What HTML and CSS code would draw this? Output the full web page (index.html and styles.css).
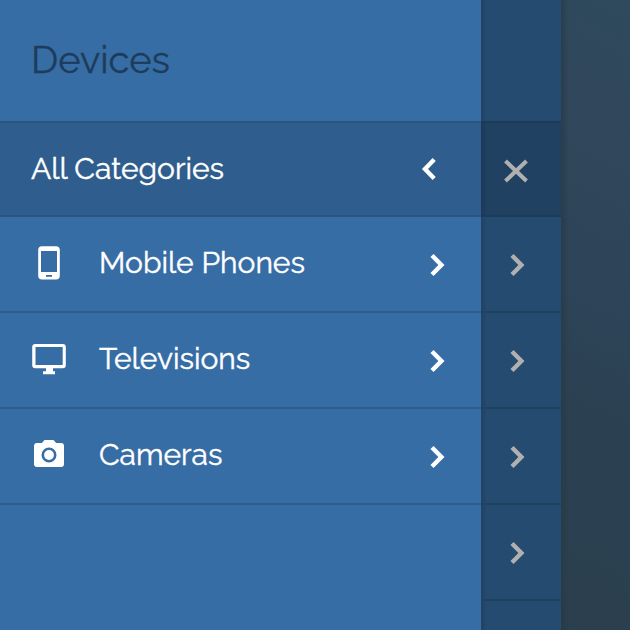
FILE: index.html
```
<!DOCTYPE html>
<html lang="en">
<head>
<meta charset="utf-8">
<title>Devices</title>
<link rel="stylesheet" href="styles.css">
</head>
<body>
<div class="screen">
  <nav class="panel">
    <h2 class="title">Devices</h2>
    <a class="row back"><span class="label">All Categories</span>
      <svg class="chev" width="16" height="24" viewBox="0 0 16 24"><path d="M13.200 2.500 4 12l9.200 9.500"/></svg></a>
    <a class="row"><svg class="icon" width="36" height="36" viewBox="0 0 36 36"><path fill-rule="evenodd" d="M11 1.200h14a3.800 3.800 0 0 1 3.800 3.800v25.700a3.800 3.800 0 0 1-3.800 3.800H11a3.800 3.800 0 0 1-3.800-3.800V5A3.800 3.800 0 0 1 11 1.200zM10 6v21h16V6zM15 30v1.700h6V30z"/></svg><span class="label">Mobile Phones</span>
      <svg class="chev" width="16" height="24" viewBox="0 0 16 24"><path d="m3 2.500 9.400 9.500L3 21.500"/></svg></a>
    <a class="row"><svg class="icon" width="36" height="36" viewBox="0 0 36 36"><path fill-rule="evenodd" d="M4.200 3h27.600a3 3 0 0 1 3 3v18.200a3 3 0 0 1-3 3H22v3h2v3H12v-3h3v-3H4.200a3 3 0 0 1-3-3V6a3 3 0 0 1 3-3zm.3 3v18h27.200V6z"/></svg><span class="label">Televisions</span>
      <svg class="chev" width="16" height="24" viewBox="0 0 16 24"><path d="m3 2.500 9.400 9.500L3 21.500"/></svg></a>
    <a class="row"><svg class="icon" width="36" height="36" viewBox="0 0 36 36"><path fill-rule="evenodd" d="M13.500 3h9l2.700 3H30a3 3 0 0 1 3 3v18a3 3 0 0 1-3 3H6a3 3 0 0 1-3-3V9a3 3 0 0 1 3-3h4.800zM18 10.500a7.500 7.500 0 1 0 0 15 7.500 7.500 0 0 0 0-15z"/><circle cx="18" cy="18" r="4.900"/></svg><span class="label">Cameras</span>
      <svg class="chev" width="16" height="24" viewBox="0 0 16 24"><path d="m3 2.500 9.400 9.500L3 21.500"/></svg></a>
  </nav>
  <aside class="rail">
    <div class="rail-top"></div>
    <div class="cell close"><svg class="cross" width="26" height="26" viewBox="0 0 26 26"><path d="M2.500 3l21 20M23.500 3l-21 20"/></svg></div>
    <div class="cell"><svg class="chev" width="16" height="24" viewBox="0 0 16 24"><path d="m3 2.500 9.400 9.500L3 21.500"/></svg></div>
    <div class="cell"><svg class="chev" width="16" height="24" viewBox="0 0 16 24"><path d="m3 2.500 9.400 9.500L3 21.500"/></svg></div>
    <div class="cell"><svg class="chev" width="16" height="24" viewBox="0 0 16 24"><path d="m3 2.500 9.400 9.500L3 21.500"/></svg></div>
    <div class="cell"><svg class="chev" width="16" height="24" viewBox="0 0 16 24"><path d="m3 2.500 9.400 9.500L3 21.500"/></svg></div>
  </aside>
  <main class="page"></main>
</div>
</body>
</html>
```
FILE: styles.css
```
* { box-sizing: border-box; }
body { margin: 0; font-family: Raleway, Lato, sans-serif; }
.screen { display: flex; width: 630px; height: 630px; overflow: hidden; }
.panel { width: 481px; background: #376da5; color: #fff; }
.title { height: 121px; margin: 0; padding: 0 31px; font-size: 38px; font-weight: 400; line-height: 119px; color: #1d3c5c; -webkit-text-stroke: .3px #1d3c5c; }
.row { display: flex; align-items: center; height: 96px; padding: 0 36px 0 31px; border-bottom: 2px solid #2f5d8d; font-size: 30px; }
.row.back { background: #2f5d8d; border-top: 2px solid #2b5580; border-bottom-color: #2b5580; padding-right: 44px; }
.row.back .label { padding-bottom: 0; }
.icon { flex: none; margin: 0 32px 2px 0; fill: #fff; }
.label { flex: 1; padding-bottom: 2px; line-height: 40px; white-space: nowrap; -webkit-text-stroke: .4px #fff; }
.chev { flex: none; fill: none; stroke: #fff; stroke-width: 4.400; margin-top: 2px; }
.row.back .chev { margin-top: 0; }
.rail { width: 80px; background: linear-gradient(90deg, #204263, #254b70 6px, #254b70); }
.rail-top { height: 121px; }
.cell { display: flex; align-items: center; justify-content: center; height: 96px; border-bottom: 2px solid #204160; }
.cell .chev { stroke: #b0b0b0; margin-left: -8px; }
.close { background: linear-gradient(90deg, #1c3856, #204162 6px, #204162); border-top: 2px solid #1d3b58; border-bottom-color: #1d3b58; }
.cross { fill: none; stroke: #b0b0b0; stroke-width: 4; margin: 4px 10px 0 0; }
.page { flex: 1; background: linear-gradient(90deg, rgba(37, 55, 65, .6), rgba(37, 55, 65, 0) 8px), linear-gradient(205deg, #2f4a5d, #31475b 20%, #2d4357 50%, #2b4152 65%, #2b3f4e); }
```
